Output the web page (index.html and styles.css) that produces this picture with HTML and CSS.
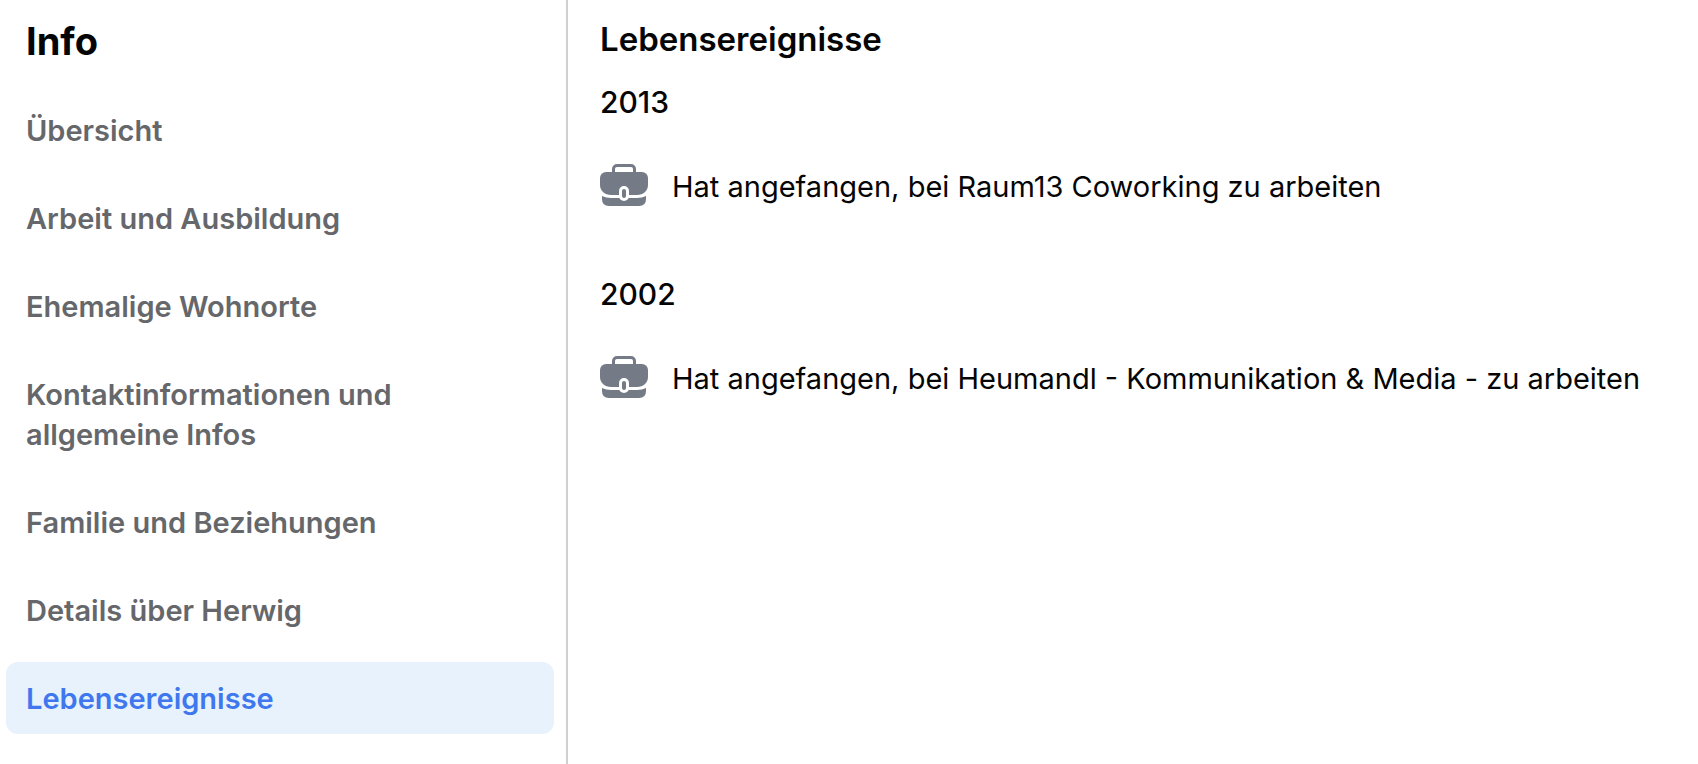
FILE: index.html
```html
<!DOCTYPE html>
<html lang="de">
<head>
<meta charset="utf-8">
<meta name="viewport" content="width=device-width, initial-scale=1">
<title>Info – Lebensereignisse</title>
<link rel="stylesheet" href="styles.css">
</head>
<body>
<svg class="defs" aria-hidden="true">
  <symbol id="briefcase" viewBox="0 0 48 46">
    <path d="M13.5 9V5a3.500 3.500 0 0 1 3.500-3.500h14a3.500 3.500 0 0 1 3.500 3.500v4" fill="none" stroke="#747b87" stroke-width="3"/>
    <path d="M6 8h36a6 6 0 0 1 6 6v7c0 6-5 10-11 10H11C5 31 0 27 0 21v-7a6 6 0 0 1 6-6z" fill="#747b87"/>
    <path d="M2 32q4 2 9 2h26q5 0 9-2v3q0 7-7 7H9q-7 0-7-7z" fill="#747b87"/>
    <rect x="19" y="22" width="10" height="15" rx="5" fill="#fff"/>
    <rect x="22" y="25" width="4" height="9" rx="2" fill="#747b87"/>
  </symbol>
</svg>
<div class="layout">
  <nav class="sidebar" aria-labelledby="info">
    <h1 class="sidebar-title" id="info">Info</h1>
    <a class="nav-link" href="#uebersicht">Übersicht</a>
    <a class="nav-link" href="#arbeit">Arbeit und Ausbildung</a>
    <a class="nav-link" href="#wohnorte">Ehemalige Wohnorte</a>
    <a class="nav-link" href="#kontakt">Kontaktinformationen und allgemeine Infos</a>
    <a class="nav-link" href="#familie">Familie und Beziehungen</a>
    <a class="nav-link" href="#details">Details über Herwig</a>
    <a class="nav-link active" href="#ereignisse" aria-current="page">Lebensereignisse</a>
  </nav>
  <main class="content" id="ereignisse">
    <h2 class="title">Lebensereignisse</h2>
    <section class="year-group">
      <h3 class="year">2013</h3>
      <a class="event" href="#raum13"><svg class="icon" aria-hidden="true"><use href="#briefcase"/></svg><span>Hat angefangen, bei Raum13 Coworking zu arbeiten</span></a>
    </section>
    <section class="year-group">
      <h3 class="year">2002</h3>
      <a class="event" href="#heumandl"><svg class="icon" aria-hidden="true"><use href="#briefcase"/></svg><span>Hat angefangen, bei Heumandl - Kommunikation &amp; Media - zu arbeiten</span></a>
    </section>
  </main>
</div>
</body>
</html>
```
FILE: styles.css
```css
* { box-sizing: border-box; }
body { margin: 0; background: #fff; color: #050505; font-family: Inter, "Liberation Sans", sans-serif; font-size: 29px; }
h1, h2, h3 { margin: 0; }
.defs { display: none; }
.layout { display: grid; grid-template-columns: 284fr 565fr; min-height: 100vh; }
.sidebar { border-right: 2px solid #ced0d4; padding: 17px 12px 16px 6px; }
.sidebar-title { font-size: 38px; line-height: 48px; font-weight: 700; padding: 0 20px; margin-bottom: 29px; }
.nav-link { display: block; padding: 17px 20px 15px; margin-bottom: 16px; border-radius: 12px; color: #65676b; font-weight: 600; line-height: 40px; text-decoration: none; }
.active { background: #e7f2fd; color: #3f78ee; }
.content { padding: 15px 32px; }
.title { font-size: 33px; line-height: 48px; font-weight: 600; }
.year { font-size: 30px; line-height: 40px; font-weight: 500; }
.year-group { padding: 19px 0 44px; }
.event { display: flex; align-items: center; gap: 24px; margin-top: 41px; color: inherit; line-height: 48px; text-decoration: none; }
.icon { width: 48px; height: 46px; flex: none; }
```
